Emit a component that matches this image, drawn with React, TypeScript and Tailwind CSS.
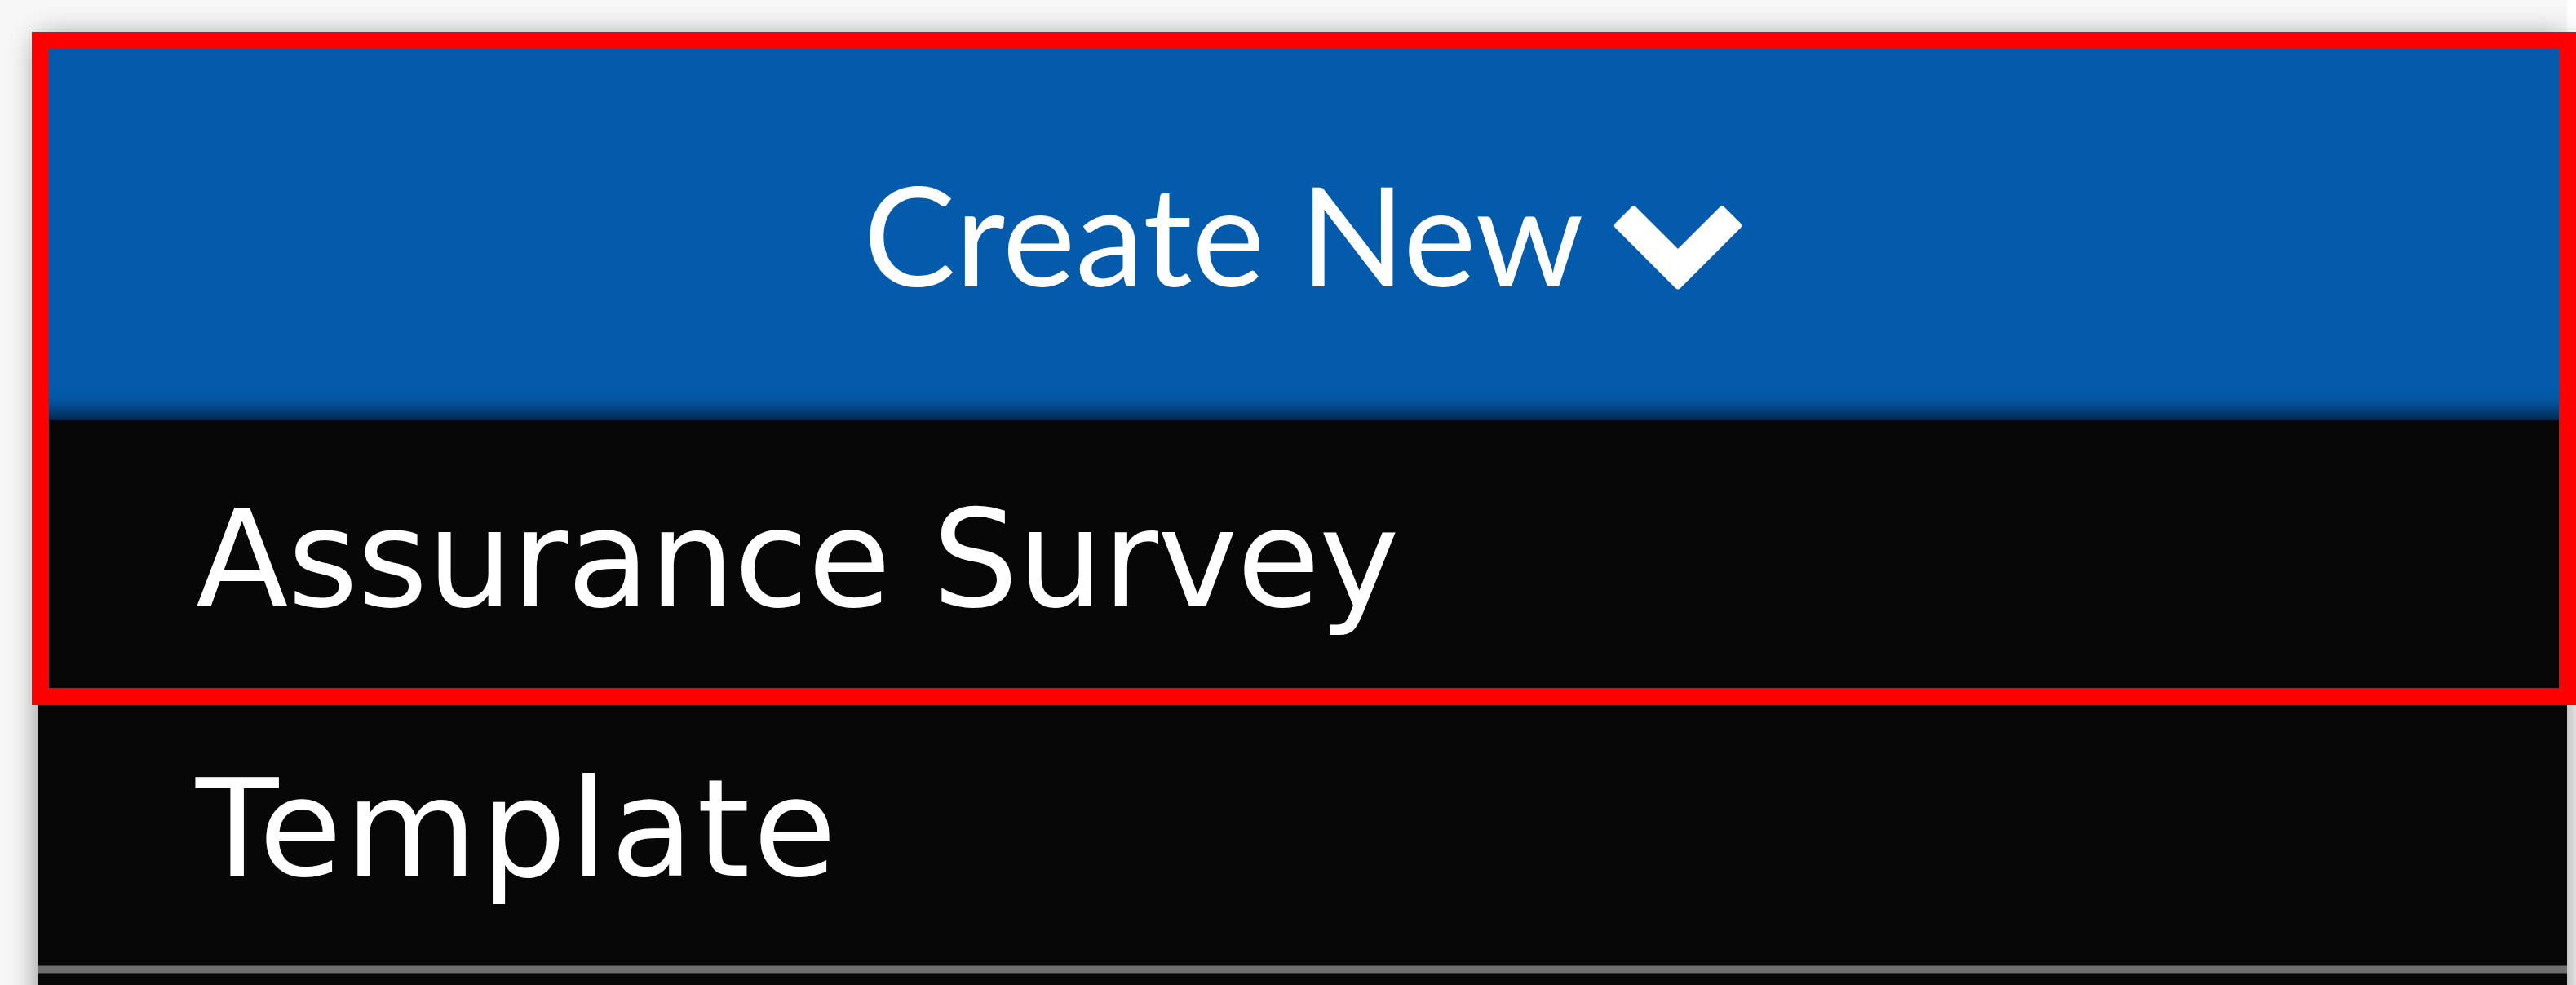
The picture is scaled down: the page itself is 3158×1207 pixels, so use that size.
import React from "react";

function Chevron() {
  return (
    <svg width="156" height="100" viewBox="0 0 156 100" overflow="visible" aria-hidden="true">
      <polygon
        points="23.9,1.6 78,55.7 132.1,1.6 152,21.4 78,95.3 4.1,21.4"
        fill="#ffffff"
        stroke="#ffffff"
        strokeWidth="8"
        strokeLinejoin="round"
      />
    </svg>
  );
}

export default function App() {
  return (
    <div className="relative w-[3158px] h-[1207px] overflow-hidden bg-white">
      <div className="w-[3147px] h-[1207px] bg-[#f7f7f7] pl-[47px] pt-[47px]">
        <div className="w-[3100px] h-[1300px] bg-[#070707] shadow-[0_0_34px_rgba(0,0,0,0.45)] flex flex-col">
          <div className="h-[468px] bg-[#045bab] shadow-[inset_0_-30px_26px_-22px_rgba(0,0,0,0.75)] flex items-center justify-center pt-[9px]">
            <div className="flex items-center gap-[38px]">
              <span className="text-white text-[169px] leading-none font-['Lato',sans-serif]">Create New</span>
              <span className="pt-[38px]">
                <Chevron />
              </span>
            </div>
          </div>
          <div className="h-[329px] pt-[88px] pl-[193px] text-white text-[166px] leading-[166px] tracking-[-1px] font-['DejaVu_Sans',sans-serif] whitespace-nowrap">
            Assurance Survey
          </div>
          <div className="h-[338px] pt-[89px] pl-[193px] text-white text-[166px] leading-[166px] tracking-[4px] font-['DejaVu_Sans',sans-serif] whitespace-nowrap">
            Template
          </div>
          <div className="h-[12px] bg-[#6e6e6e] border-y-[2px] border-[#3a3a3a]" />
          <div className="flex-1 bg-[#080808]" />
        </div>
      </div>
      <div className="absolute left-[39px] top-[39px] w-[3119px] h-[825px] border-[21px] border-[#ff0000] pointer-events-none" />
    </div>
  );
}
